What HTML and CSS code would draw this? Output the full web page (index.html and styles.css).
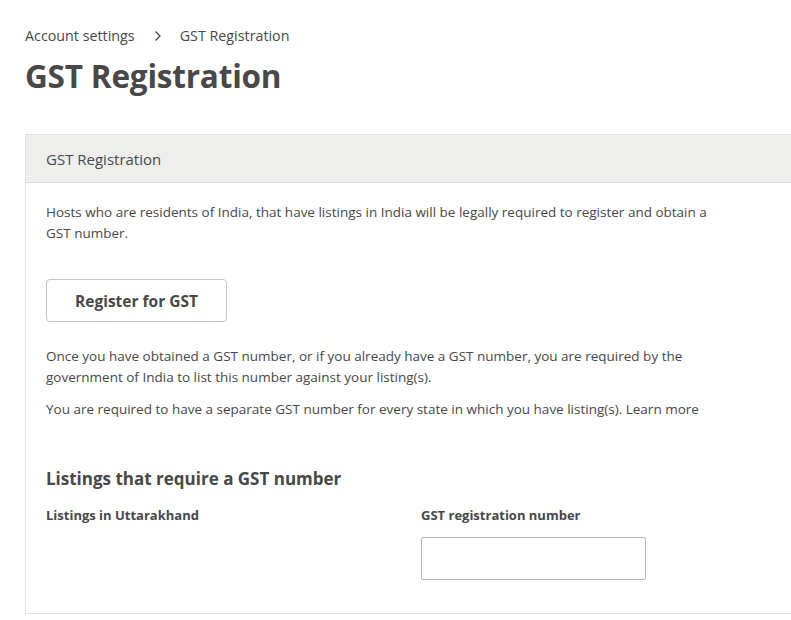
FILE: index.html
```html
<!DOCTYPE html>
<html>
<head>
<meta charset="utf-8">
<link rel="stylesheet" href="styles.css">
</head>
<body>
<div class="page">
  <nav class="crumbs">
    <span>Account settings</span>
    <svg class="chev" width="8" height="12" viewBox="0 0 8 12"><path d="M1.5 1.5 L6 6 L1.5 10.5" fill="none" stroke="#484848" stroke-width="1.3"/></svg>
    <span>GST Registration</span>
  </nav>
  <h1 class="title">GST Registration</h1>
  <section class="card">
    <div class="card-head">GST Registration</div>
    <div class="card-body">
      <p class="txt">Hosts who are residents of India, that have listings in India will be legally required to register and obtain a GST number.</p>
      <button class="btn">Register for GST</button>
      <p class="txt">Once you have obtained a GST number, or if you already have a GST number, you are required by the government of India to list this number against your listing(s).</p>
      <p class="txt">You are required to have a separate GST number for every state in which you have listing(s). Learn more</p>
      <h2 class="sub">Listings that require a GST number</h2>
      <div class="cols">
        <div class="col">
          <div class="lbl">Listings in Uttarakhand</div>
        </div>
        <div class="col">
          <div class="lbl">GST registration number</div>
          <div class="input"></div>
        </div>
      </div>
    </div>
  </section>
</div>
</body>
</html>
```
FILE: styles.css
```css
html, body { margin: 0; padding: 0; background: #fff; overflow: hidden; }
body { font-family: "Open Sans", "Liberation Sans", sans-serif; color: #484848; }
.page { padding: 26px 0 0 25px; }
.crumbs { display: flex; align-items: center; font-size: 14.3px; line-height: 20px; color: #484848; }
.chev { margin: 0 18px 0 19px; }
.title { margin: 8px 0 0; font-size: 31.5px; line-height: 44px; font-weight: 700; color: #484848; letter-spacing: -0.2px; }
.card { margin-top: 36px; width: 790px; border: 1px solid #e0e0e0; border-right: none; }
.card-head { background: #eeefed; border-bottom: 1px solid #dcdedc; height: 47px; display: flex; align-items: center; padding-left: 20px; font-size: 15px; }
.card-body { padding: 19px 20px 33px; }
.txt { margin: 0 0 11px; font-size: 13.5px; line-height: 21px; max-width: 680px; }
.btn { display: block; margin: 35px 0 24px; width: 181px; height: 43px; background: #fff; border: 1px solid #c4c4c4; border-radius: 4px; font-family: inherit; font-size: 15.5px; font-weight: 700; color: #484848; }
.sub { margin: 46px 0 13px; font-size: 17px; line-height: 26px; font-weight: 700; }
.cols { display: grid; grid-template-columns: 375px 1fr; }
.lbl { font-size: 13px; font-weight: 700; line-height: 20px; }
.input { margin-top: 12px; width: 223px; height: 41px; border: 1px solid #b5b5b5; border-radius: 2px; }
```
